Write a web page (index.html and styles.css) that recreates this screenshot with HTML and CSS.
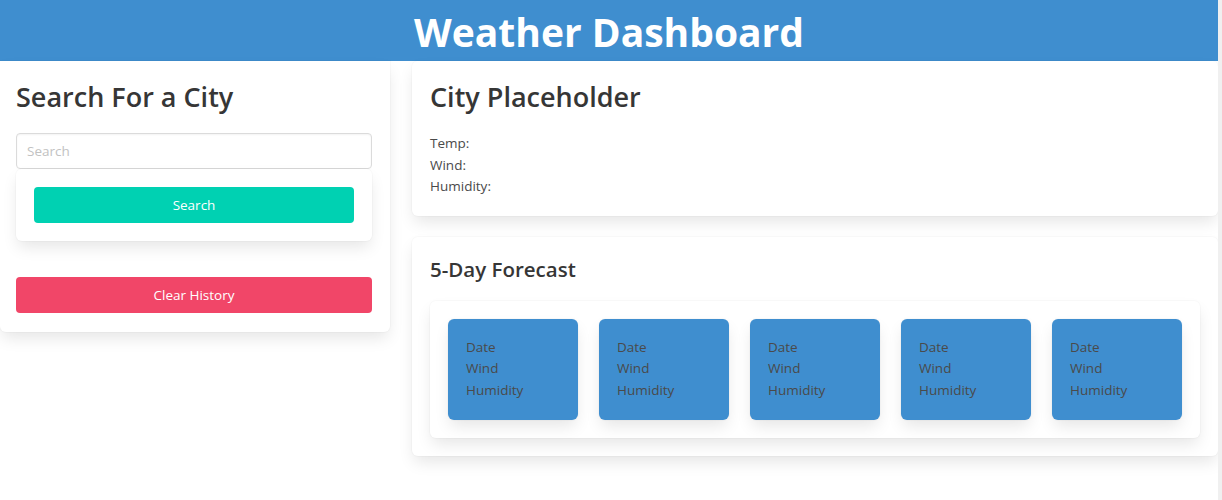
FILE: index.html
```html
<!DOCTYPE html>
<html lang="en">
<head>
<meta charset="utf-8">
<title>Weather Dashboard</title>
<link rel="stylesheet" href="styles.css">
</head>
<body>
<div class="page">
  <div class="main">
    <header class="hero">
      <h1 class="hero-title">Weather Dashboard</h1>
    </header>
    <div class="columns">
      <aside class="side card">
        <h2 class="title">Search For a City</h2>
        <input class="input" type="text" placeholder="Search">
        <div class="box">
          <button class="btn btn-primary">Search</button>
        </div>
        <button class="btn btn-danger clear">Clear History</button>
      </aside>
      <section class="content">
        <div class="card today">
          <h2 class="title">City Placeholder</h2>
          <p class="line">Temp:</p>
          <p class="line">Wind:</p>
          <p class="line">Humidity:</p>
        </div>
        <div class="card forecast">
          <h3 class="subtitle">5-Day Forecast</h3>
          <div class="box days">
            <div class="day"><p>Date</p><p>Wind</p><p>Humidity</p></div>
            <div class="day"><p>Date</p><p>Wind</p><p>Humidity</p></div>
            <div class="day"><p>Date</p><p>Wind</p><p>Humidity</p></div>
            <div class="day"><p>Date</p><p>Wind</p><p>Humidity</p></div>
            <div class="day"><p>Date</p><p>Wind</p><p>Humidity</p></div>
          </div>
        </div>
      </section>
    </div>
  </div>
  <div class="strip"></div>
</div>
</body>
</html>
```
FILE: styles.css
```css
* { box-sizing: border-box; }
html, body { margin: 0; padding: 0; }
body {
  font-family: "Open Sans", "Noto Sans", sans-serif;
  color: #4a4a4a;
  background: #fff;
}
.page { display: flex; min-height: 500px; }
.main { flex: 1; min-width: 0; }
.strip { width: 4px; background: #f0f0f0; }

.hero {
  background: #3f8ecf;
  height: 61px;
  display: flex;
  justify-content: center;
  align-items: center;
}
.hero-title {
  margin: 0;
  color: #fff;
  font-size: 39px;
  font-weight: 700;
  line-height: 1;
  padding-top: 2px;
}

.columns { display: flex; gap: 22px; align-items: flex-start; }

.card {
  background: #fff;
  border-radius: 0 0 6px 6px;
  box-shadow: 0 8px 16px -2px rgba(10,10,10,0.1), 0 0 0 1px rgba(10,10,10,0.02);
}
.side {
  width: 390px;
  padding: 18px 18px 19px 16px;
  display: flex;
  flex-direction: column;
}
.title {
  margin: 0;
  font-size: 27px;
  font-weight: 600;
  line-height: 36px;
  color: #363636;
}
.input {
  margin-top: 18px;
  height: 36px;
  width: 356px;
  border: 1px solid #dbdbdb;
  border-radius: 4px;
  padding: 0 10px;
  font-family: inherit;
  font-size: 13.5px;
  color: #363636;
  box-shadow: inset 0 1px 2px rgba(10,10,10,0.05);
}
.input::placeholder { color: #c2c2c2; }
.box {
  background: #fff;
  border-radius: 6px;
  box-shadow: 0 8px 16px -2px rgba(10,10,10,0.1), 0 0 0 1px rgba(10,10,10,0.02);
  padding: 18px;
}
.side .box { width: 356px; }
.btn {
  display: block;
  width: 100%;
  height: 36px;
  border: 0;
  border-radius: 4px;
  color: #fff;
  font-family: inherit;
  font-size: 13.5px;
  cursor: pointer;
}
.btn-primary { background: #00d1b2; }
.btn-danger { background: #f14668; }
.clear { margin-top: 36px; width: 356px; }

.content { flex: 1; display: flex; flex-direction: column; gap: 21px; }
.today { padding: 18px; border-radius: 6px; }
.line { margin: 0; font-size: 13.5px; line-height: 21.5px; color: #4a4a4a; }
.today .title { margin-bottom: 18px; }
.forecast { padding: 18px; border-radius: 6px; }
.subtitle {
  margin: 0 0 18px;
  font-size: 20.5px;
  font-weight: 600;
  line-height: 28px;
  color: #363636;
}
.days { display: flex; gap: 21px; }
.day {
  flex: 1;
  background: #3f8ecf;
  border-radius: 6px;
  padding: 18px 18px 19px;
  box-shadow: 0 8px 16px -2px rgba(10,10,10,0.1), 0 0 0 1px rgba(10,10,10,0.02);
}
.day p { margin: 0; font-size: 13.5px; line-height: 21.5px; color: #4a4a4a; }
```
